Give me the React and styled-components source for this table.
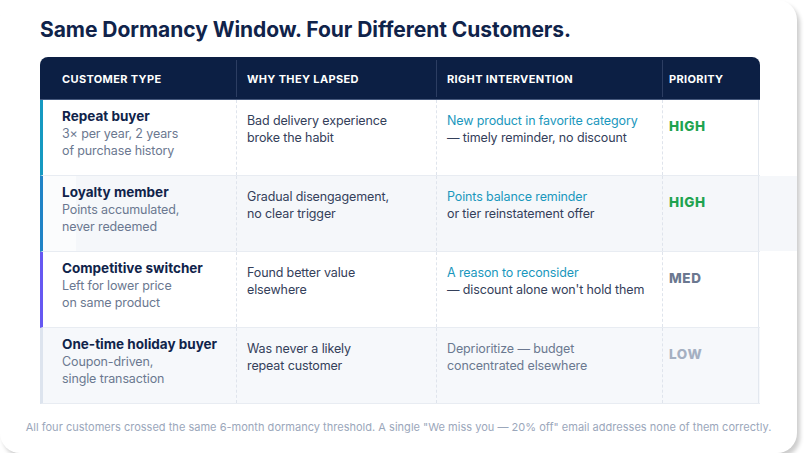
import React from "react";
import styled, { createGlobalStyle } from "styled-components";

const GlobalStyle = createGlobalStyle`
  html, body { margin: 0; padding: 0; background: #ffffff; }
  body { font-family: Inter, "Noto Sans", sans-serif; -webkit-font-smoothing: antialiased; }
  * { box-sizing: border-box; }
`;

const Card = styled.div`
  width: 797px;
  height: 453px;
  background: #ffffff;
  border-radius: 20px;
  box-shadow: 3px 4px 4px rgba(0, 0, 0, 0.2);
  padding: 17px 37px 0 40px;
  display: flex;
  flex-direction: column;
`;

const Title = styled.h1`
  margin: 0;
  font-size: 21px;
  line-height: 26px;
  font-weight: 700;
  color: #10234a;
  letter-spacing: -0.05px;
`;

const Table = styled.div`
  margin-top: 14px;
  width: 720px;
  display: flex;
  flex-direction: column;
`;

const Header = styled.div`
  display: grid;
  grid-template-columns: 196px 200px 226px 98px;
  height: 43px;
  background: #0c1f44;
  border-radius: 8px 8px 0 0;
  border-bottom: 1px solid #46587c;
  padding: 3px 0 2px;
`;

const HeadCell = styled.div`
  display: flex;
  align-items: center;
  padding-left: ${(p) => p.$pad}px;
  border-left: ${(p) => (p.$first ? "none" : "1px solid #2c3d62")};
  color: #ffffff;
  font-size: 11px;
  font-weight: 700;
  letter-spacing: 0.35px;
  text-transform: uppercase;
`;

const Row = styled.div`
  position: relative;
  isolation: isolate;
  display: grid;
  grid-template-columns: 193px 200px 226px 97px;
  height: 76px;
  border-left: 3px solid ${(p) => p.$accent};
  border-bottom: 1px solid #e8ecf2;
  background: ${(p) => p.$bg};

  ${(p) =>
    p.$band &&
    `&::before {
      content: "";
      position: absolute;
      top: 0;
      bottom: 0;
      left: 33px;
      right: -37px;
      background: #f5f7fa;
      z-index: -1;
    }`}
`;

const Cell = styled.div`
  padding-top: ${(p) => p.$top}px;
  padding-left: ${(p) => p.$pad}px;
  border-left: ${(p) => (p.$divider ? "1px dashed #dfe4ec" : "none")};
  border-right: ${(p) => (p.$last ? "1px solid #e3e8ef" : "none")};
  font-size: 12.5px;
  letter-spacing: -0.12px;
  line-height: 17px;
  color: #34405a;
`;

const TypeName = styled.div`
  font-weight: 700;
  color: #10234a;
  font-size: 13.5px;
  letter-spacing: 0;
`;

const TypeNote = styled.div`
  color: #6b7890;
`;

const Link = styled.div`
  color: #1a97bd;
`;

const Muted = styled.div`
  color: #6b7890;
`;

const Priority = styled.div`
  font-weight: 800;
  font-size: 13.5px;
  letter-spacing: 0.6px;
  color: ${(p) => p.$color};
`;

const Footer = styled.p`
  margin: 16px -37px 0 -40px;
  text-align: center;
  font-size: 11px;
  line-height: 14px;
  letter-spacing: 0.02px;
  color: #9ba7bb;
`;

const rows = [
  {
    accent: "#1699c1",
    bg: "#ffffff",
    name: "Repeat buyer",
    note: ["3× per year, 2 years", "of purchase history"],
    why: ["Bad delivery experience", "broke the habit"],
    link: "New product in favorite category",
    rest: "— timely reminder, no discount",
    prio: "HIGH",
    color: "#1fa34f",
  },
  {
    accent: "#2083c6",
    bg: "#fbfcfd",
    band: true,
    name: "Loyalty member",
    note: ["Points accumulated,", "never redeemed"],
    why: ["Gradual disengagement,", "no clear trigger"],
    link: "Points balance reminder",
    rest: "or tier reinstatement offer",
    prio: "HIGH",
    color: "#1fa34f",
  },
  {
    accent: "#6658f2",
    bg: "#ffffff",
    name: "Competitive switcher",
    note: ["Left for lower price", "on same product"],
    why: ["Found better value", "elsewhere"],
    link: "A reason to reconsider",
    rest: "— discount alone won't hold them",
    prio: "MED",
    color: "#6b7890",
  },
  {
    accent: "#dde4ee",
    bg: "#f6f8fb",
    name: "One-time holiday buyer",
    note: ["Coupon-driven,", "single transaction"],
    why: ["Was never a likely", "repeat customer"],
    muted: ["Deprioritize — budget", "concentrated elsewhere"],
    prio: "LOW",
    color: "#a5b0c2",
  },
];

export default function App() {
  return (
    <>
      <GlobalStyle />
      <Card>
        <Title>Same Dormancy Window. Four Different Customers.</Title>
        <Table>
          <Header>
            <HeadCell $first $pad={22}>Customer Type</HeadCell>
            <HeadCell $pad={10}>Why They Lapsed</HeadCell>
            <HeadCell $pad={10}>Right Intervention</HeadCell>
            <HeadCell $pad={6}>Priority</HeadCell>
          </Header>
          {rows.map((r) => (
            <Row key={r.name} $accent={r.accent} $bg={r.bg} $band={r.band}>
              <Cell $top={8} $pad={19}>
                <TypeName>{r.name}</TypeName>
                {r.note.map((n) => (
                  <TypeNote key={n}>{n}</TypeNote>
                ))}
              </Cell>
              <Cell $top={11.5} $pad={10} $divider>
                {r.why.map((w) => (
                  <div key={w}>{w}</div>
                ))}
              </Cell>
              <Cell $top={11.5} $pad={10} $divider>
                {r.muted ? (
                  r.muted.map((m) => <Muted key={m}>{m}</Muted>)
                ) : (
                  <>
                    <Link>{r.link}</Link>
                    <div>{r.rest}</div>
                  </>
                )}
              </Cell>
              <Cell $top={18} $pad={6} $divider $last>
                <Priority $color={r.color}>{r.prio}</Priority>
              </Cell>
            </Row>
          ))}
        </Table>
        <Footer>
          All four customers crossed the same 6-month dormancy threshold. A single "We miss you — 20% off" email
          addresses none of them correctly.
        </Footer>
      </Card>
    </>
  );
}
